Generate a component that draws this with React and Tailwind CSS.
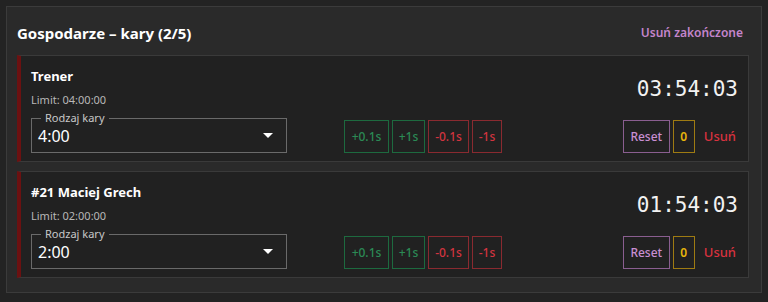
import React from 'react';

const PENALTIES = [
  { id: 1, name: 'Trener', limit: '04:00:00', kind: '4:00', time: '03:54:03' },
  { id: 2, name: '#21 Maciej Grech', limit: '02:00:00', kind: '2:00', time: '01:54:03' },
];

const ADJUST = [
  { label: '+0.1s', w: 'w-[45px]', cls: 'border-[#1d6a3f] text-[#2b8a55]' },
  { label: '+1s', w: 'w-[33px]', cls: 'border-[#1d6a3f] text-[#2b8a55]' },
  { label: '-0.1s', w: 'w-[41px]', cls: 'border-[#8a2a30] text-[#d2343f]' },
  { label: '-1s', w: 'w-[30px]', cls: 'border-[#8a2a30] text-[#d2343f]' },
];

const PenaltyCard = ({ item }) => (
  <div className="h-[107px] border border-[#3a3a3a] border-l-[4px] border-l-[#6b1111] bg-[#212121] pl-[10px] pr-[10px] pt-[10px] flex flex-col">
    <div className="flex justify-between">
      <div className="flex flex-col">
        <span className="text-[13px] leading-[20px] font-bold text-white">{item.name}</span>
        <span className="mt-[7px] text-[11px] leading-[14px] text-[#b8b8b8]">Limit: {item.limit}</span>
      </div>
      <span className="mt-[11px] font-['DejaVu_Sans_Mono',monospace] text-[21px] leading-[24px] text-[#f2f2f2]">{item.time}</span>
    </div>

    <div className="mt-[11px] flex items-end">
      <div className="relative w-[256px] h-[35px] border border-[#6a6a6a] flex items-center pl-[6px] pr-[13px]">
        <span className="absolute -top-[8px] left-[9px] bg-[#212121] px-[4px] text-[11px] leading-[14px] text-[#c8c8c8]">Rodzaj kary</span>
        <span className="flex-1 text-[16px] leading-[20px] text-white">{item.kind}</span>
        <svg width="10" height="5" viewBox="0 0 10 5"><path d="M0 0h10L5 5z" fill="#ffffff" /></svg>
      </div>

      <div className="ml-[57px] flex gap-[3px]">
        {ADJUST.map(b => (
          <button key={b.label} className={`${b.w} h-[33px] border ${b.cls} text-[12px] font-medium flex items-center justify-center`}>{b.label}</button>
        ))}
      </div>

      <div className="flex-1" />

      <div className="flex items-center gap-[3px]">
        <button className="w-[47px] h-[33px] border border-[#8a5e90] text-[#c98fd2] text-[12px] font-medium flex items-center justify-center">Reset</button>
        <button className="w-[22px] h-[33px] border border-[#9e7b12] text-[#e8b60c] text-[12px] font-semibold flex items-center justify-center">0</button>
        <button className="ml-[6px] mr-[2px] text-[#d8323f] text-[13px] font-medium h-[33px] flex items-center">Usuń</button>
      </div>
    </div>
  </div>
);

export default function App() {
  return (
    <div className="h-[302px] w-[768px] bg-[#232323] p-[6px] font-['Noto_Sans','Open_Sans',sans-serif]">
      <div className="h-[287px] w-[756px] border border-[#3b3b3b] bg-[#2a2a2a] pl-[10px] pr-[12px]">
        <div className="flex items-center justify-between pt-[16px] pb-[12px]">
          <h2 className="text-[15px] leading-[20px] font-bold text-white">Gospodarze – kary (2/5)</h2>
          <button className="text-[12px] leading-[20px] font-semibold text-[#c485cc] mr-[6px]">Usuń zakończone</button>
        </div>
        <div className="flex flex-col gap-[9px]">
          {PENALTIES.map(p => <PenaltyCard key={p.id} item={p} />)}
        </div>
      </div>
    </div>
  );
}
